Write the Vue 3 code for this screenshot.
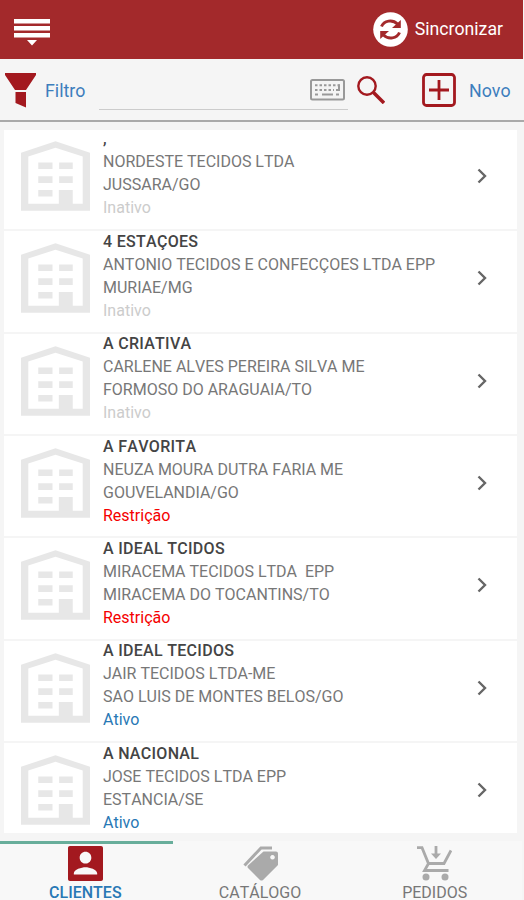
<script setup>
import { ref } from "vue";

const clients = ref([
  { name: ",", company: "NORDESTE TECIDOS LTDA", city: "JUSSARA/GO", status: "Inativo" },
  { name: "4 ESTAÇOES", company: "ANTONIO TECIDOS E CONFECÇOES LTDA EPP", city: "MURIAE/MG", status: "Inativo" },
  { name: "A CRIATIVA", company: "CARLENE ALVES PEREIRA SILVA ME", city: "FORMOSO DO ARAGUAIA/TO", status: "Inativo" },
  { name: "A FAVORITA", company: "NEUZA MOURA DUTRA FARIA ME", city: "GOUVELANDIA/GO", status: "Restrição" },
  { name: "A IDEAL TCIDOS", company: "MIRACEMA TECIDOS LTDA  EPP", city: "MIRACEMA DO TOCANTINS/TO", status: "Restrição" },
  { name: "A IDEAL TECIDOS", company: "JAIR TECIDOS LTDA-ME", city: "SAO LUIS DE MONTES BELOS/GO", status: "Ativo" },
  { name: "A NACIONAL", company: "JOSE TECIDOS LTDA EPP", city: "ESTANCIA/SE", status: "Ativo" },
]);

const search = ref("");
const activeTab = ref("clientes");
</script>

<template>
  <div class="app">
    <header class="topbar">
      <svg class="menu" viewBox="0 0 36 28">
        <path d="M0 1h36v4.500H0zM0 8h36v4.500H0zM0 15h36v4.500H0zM13 22h10l-5 5.500z" fill="#fff" />
      </svg>
      <button class="sync">
        <svg width="35" height="35" viewBox="0 0 35 35">
          <circle cx="17.5" cy="17.5" r="17.3" fill="#fff" />
          <g fill="none" stroke="#a3292b" stroke-width="3">
            <path d="M8.500 14.500c2.500-6 11-7.500 16-2.500" />
            <path d="M26.500 20.500c-2.500 6-11 7.500-16 2.500" />
          </g>
          <path d="M27.800 8v8h-8.800zM7.200 27v-8h8.800z" fill="#a3292b" />
        </svg>
        <span>Sincronizar</span>
      </button>
    </header>

    <div class="toolbar">
      <svg class="funnel" viewBox="0 0 32 35">
        <path d="M0 0h31v2L21 17H10L0 2zM10.500 19h10.500v15.500l-10.500-4.500z" fill="#a3191f" />
      </svg>
      <span class="link filter-label">Filtro</span>
      <div class="search-field">
        <input v-model="search" type="text" />
        <svg width="35" height="22" viewBox="0 0 35 22">
          <rect x="1" y="1" width="33" height="19.500" rx="1.500" fill="#f4f4f4" stroke="#999" stroke-width="2" />
          <g stroke="#999" stroke-width="2" fill="none">
            <path d="M5 6.200h25" stroke-dasharray="2.500 2" />
            <path d="M5 11h19" stroke-dasharray="2.500 2" />
            <path d="M26 11H29V5.500" />
            <path d="M5 15.500h3M12 15.500h11M26 15.500h3" />
          </g>
        </svg>
      </div>
      <svg class="magnifier" viewBox="0 0 28 28">
        <g fill="none" stroke="#a3191f">
          <circle cx="10" cy="10" r="8.700" stroke-width="2.400" />
          <path d="M16.500 16.500l10.500 10.500" stroke-width="3.500" />
        </g>
      </svg>
      <svg class="plus" viewBox="0 0 34 34">
        <g fill="none" stroke="#a3191f" stroke-width="2.800">
          <rect x="1.500" y="1.500" width="31" height="31" rx="3" />
          <path d="M17 7v20M7 17h20" />
        </g>
      </svg>
      <span class="link">Novo</span>
    </div>

    <main class="list">
      <div v-for="client in clients" :key="client.company" class="row">
        <svg class="building" viewBox="0 0 208 210">
          <path
            fill="#e7e7e7"
            fill-rule="evenodd"
            d="M0 35L104 0l104 35v175H0zM22 46v143h92v-42h42v42h30V46L104 20zM52 64h43v20H52zM115 64h41v20h-41zM52 106h43v20H52zM115 106h41v20h-41zM52 147h43v20H52z"
          />
        </svg>
        <div class="info">
          <div class="name">{{ client.name }}</div>
          <div class="line">{{ client.company }}</div>
          <div class="line">{{ client.city }}</div>
          <div class="status" :class="client.status === 'Restrição' ? 'restricao' : client.status.toLowerCase()">
            {{ client.status }}
          </div>
        </div>
        <svg class="chevron" viewBox="0 0 10 16">
          <path d="M1.500 1.500L8 8l-6.500 6.500" fill="none" stroke="#666" stroke-width="2.400" />
        </svg>
      </div>
    </main>

    <nav class="tabs">
      <div class="tab" :class="{ active: activeTab === 'clientes' }" @click="activeTab = 'clientes'">
        <svg viewBox="3 3 18 18">
          <path
            fill="#a3191f"
            d="M3 4v16c0 .6.4 1 1 1h16c.6 0 1-.4 1-1V4c0-.6-.4-1-1-1H4c-.6 0-1 .4-1 1zm12 5c0 1.660-1.340 3-3 3s-3-1.340-3-3 1.340-3 3-3 3 1.340 3 3zm-9 8c0-2 4-3.100 6-3.100s6 1.100 6 3.100v.6H6v-.6z"
          />
        </svg>
        <span>CLIENTES</span>
      </div>
      <div class="tab" :class="{ active: activeTab === 'catalogo' }" @click="activeTab = 'catalogo'">
        <svg viewBox="0 0 35 35">
          <path d="M1.500 19.500L18 2H29" fill="none" stroke="#aaa" stroke-width="3" />
          <path
            fill="#aaa"
            fill-rule="evenodd"
            d="M20.500 5.500H33q2 0 2 2V19L20 34q-1.500 1-3 0L5 22q-1-1.500 0-2.500zM29.500 9a2.300 2.300 0 1 0 .01 0z"
          />
        </svg>
        <span>CATÁLOGO</span>
      </div>
      <div class="tab" :class="{ active: activeTab === 'pedidos' }" @click="activeTab = 'pedidos'">
        <svg viewBox="0 0 35 35">
          <g fill="none" stroke="#aaa" stroke-width="2.800">
            <path d="M0 1.700h5L11.500 17.500H27L34 4.500" />
            <path d="M11.500 17.500L7.500 24.500h24" />
            <path d="M19 0v9" />
          </g>
          <path d="M14 7.500h10L19 13z" fill="#aaa" />
          <circle cx="9" cy="31" r="3.500" fill="#aaa" />
          <circle cx="28" cy="31" r="3.500" fill="#aaa" />
        </svg>
        <span>PEDIDOS</span>
      </div>
    </nav>
  </div>
</template>

<style>
body {
  margin: 0;
  overflow: hidden;
}
</style>

<style scoped>
.app {
  width: 524px;
  height: 900px;
  display: flex;
  flex-direction: column;
  overflow: hidden;
  box-sizing: border-box;
  background: #f5f5f5;
  font-family: Roboto, sans-serif;
  font-size: 16px;
  font-kerning: none;
}

.topbar {
  display: flex;
  flex-shrink: 0;
  justify-content: space-between;
  align-items: flex-start;
  height: 59px;
  box-sizing: border-box;
  padding: 11px 20px 0 14px;
  margin-right: 1px;
  background: #a3292b;
}

.menu {
  width: 36px;
  height: 28px;
  margin-top: 7px;
}

.sync {
  display: flex;
  align-items: center;
  gap: 7px;
  padding: 0;
  border: none;
  background: none;
  color: #fff;
  font: 17.7px/35px Roboto, sans-serif;
  font-kerning: none;
}

.sync span {
  padding-top: 1px;
}

.toolbar {
  display: flex;
  flex-shrink: 0;
  align-items: center;
  height: 63px;
  box-sizing: border-box;
  padding: 1px 13px 0 5px;
  border-bottom: 2px solid #aaa;
}

.toolbar svg {
  flex-shrink: 0;
}

.funnel {
  width: 32px;
  height: 35px;
}

.link {
  color: #3d7ebd;
  font-size: 17.8px;
  line-height: 22px;
  padding-top: 1px;
}

.filter-label {
  width: 54px;
  margin-left: 8px;
}

.search-field {
  display: flex;
  align-items: center;
  width: 249px;
  height: 40px;
  box-sizing: border-box;
  padding: 1px 3px 0 0;
  border-bottom: 1px solid #ccc;
}

.search-field input {
  flex: 1;
  min-width: 0;
  border: none;
  outline: none;
  background: transparent;
}

.magnifier {
  width: 28px;
  height: 28px;
  margin-left: 9px;
}

.plus {
  width: 34px;
  height: 34px;
  margin: 0 13px 0 37px;
}

.list {
  flex-shrink: 0;
  height: 703px;
  margin: 8px 7px 0 4px;
  overflow: hidden;
  background: #fff;
}

.row {
  display: flex;
  height: 102.4px;
  box-sizing: border-box;
  padding: 0 30px 0 17px;
  border-top: 2px solid #f5f5f5;
}

/* the top of the first row is scrolled under the toolbar */
.row:first-child {
  height: 99.2px;
  border-top: none;
}

.row:first-child > .building {
  margin-top: 11.2px;
}

.row:first-child > .info {
  margin-top: -2.7px;
}

.row:first-child > .chevron {
  margin-top: 38px;
}

.building {
  width: 69px;
  height: 70px;
  margin-top: 12px;
}

.info {
  flex: 1;
  margin: -1.400px 0 0 13px;
  line-height: 23px;
  white-space: pre;
}

.name {
  color: #444;
  font-weight: 500;
  letter-spacing: 0.3px;
}

.line {
  color: #777;
}

.inativo {
  color: #ccc;
}

.restricao {
  color: #f50000;
}

.ativo {
  color: #2878b5;
}

.chevron {
  width: 10px;
  height: 16px;
  margin-top: 39px;
}

.tabs {
  display: flex;
  flex: 1;
  margin: 8px 2px 0 -2px;
  background: #f8f8f8;
}

.tab {
  display: flex;
  flex: 1;
  flex-direction: column;
  align-items: center;
  border-top: 3px solid transparent;
  color: #777;
}

.tab svg {
  flex-shrink: 0;
  width: 35px;
  height: 35px;
  margin-top: 2px;
}

.tab span {
  margin-top: 4px;
  line-height: 16px;
}

.tab.active {
  border-top-color: #68ae9b;
  color: #2878b5;
}

.tab.active span {
  font-weight: 500;
}
</style>
